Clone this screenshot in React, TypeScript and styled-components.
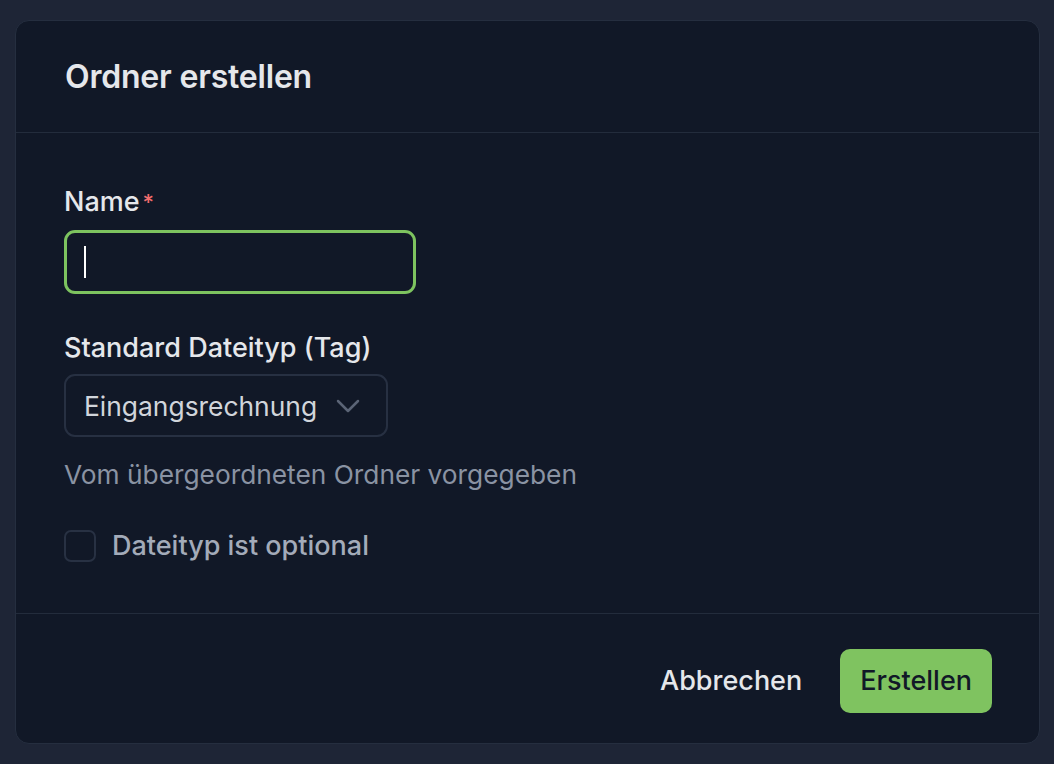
import React from "react";
import styled, { createGlobalStyle } from "styled-components";

const Global = createGlobalStyle`
  html, body { margin: 0; padding: 0; background: #1e2536; }
  body { font-family: Inter, "Noto Sans", sans-serif; -webkit-font-smoothing: antialiased; }
  * { box-sizing: border-box; }
`;

const Page = styled.div`
  width: 1054px;
  height: 764px;
  padding: 20px 14px 20px 15px;
`;

const Dialog = styled.div`
  height: 724px;
  background: #111827;
  border: 1px solid #252e3f;
  border-radius: 14px;
  display: flex;
  flex-direction: column;
`;

const Header = styled.div`
  height: 112px;
  padding: 0 49px;
  display: flex;
  align-items: center;
  border-bottom: 1px solid #232c3c;
`;

const Title = styled.h2`
  margin: 0;
  font-size: 32px;
  font-weight: 600;
  color: #e5e7eb;
  letter-spacing: -0.2px;
`;

const Body = styled.div`
  flex: 1;
  padding: 53px 48px 0;
  display: flex;
  flex-direction: column;
  align-items: flex-start;
  border-bottom: 1px solid #232c3c;
`;

const Label = styled.label<{ $top?: number }>`
  display: block;
  font-size: 27px;
  line-height: 32px;
  font-weight: 500;
  color: #e5e7eb;
  margin-top: ${(p) => p.$top ?? 0}px;
`;

const Required = styled.span`
  color: #f26d6d;
  margin-left: 3px;
  font-size: 22px;
  vertical-align: top;
`;

const Field = styled.div`
  margin-top: 12px;
  width: 352px;
  height: 64px;
  border: 3px solid #7dc35f;
  border-radius: 11px;
  display: flex;
  align-items: center;
  padding-left: 17px;
`;

const Caret = styled.span`
  width: 2px;
  height: 32px;
  background: #ffffff;
`;

const Select = styled.div`
  margin-top: 10px;
  width: 324px;
  height: 63px;
  border: 2px solid #273042;
  border-radius: 11px;
  display: flex;
  align-items: center;
  justify-content: space-between;
  padding: 0 26px 0 18px;
  font-size: 26.4px;
  color: #d1d5db;
`;

const Helper = styled.p`
  margin: 22px 0 0;
  font-size: 26.3px;
  line-height: 32px;
  color: #8a93a3;
`;

const CheckRow = styled.label`
  margin-top: 39px;
  display: flex;
  align-items: center;
  gap: 16px;
  font-size: 27px;
  line-height: 32px;
  font-weight: 500;
  color: #a3abb9;
`;

const Box = styled.span`
  width: 32px;
  height: 32px;
  border: 2px solid #283143;
  border-radius: 7px;
`;

const Footer = styled.div`
  height: 129px;
  display: flex;
  align-items: center;
  justify-content: flex-end;
  gap: 38px;
  padding: 4px 47px 0 0;
`;

const TextButton = styled.button`
  background: none;
  border: none;
  padding: 0;
  font-family: inherit;
  font-size: 27px;
  font-weight: 500;
  color: #e5e7eb;
`;

const PrimaryButton = styled.button`
  height: 64px;
  padding: 0 20px;
  background: #7fc360;
  border: none;
  border-radius: 10px;
  font-family: inherit;
  font-size: 27px;
  font-weight: 500;
  color: #111827;
`;

export default function App() {
  return (
    <Page>
      <Global />
      <Dialog>
        <Header>
          <Title>Ordner erstellen</Title>
        </Header>
        <Body>
          <Label>
            Name<Required>*</Required>
          </Label>
          <Field>
            <Caret />
          </Field>
          <Label $top={38}>Standard Dateityp (Tag)</Label>
          <Select>
            <span>Eingangsrechnung</span>
            <svg width="24" height="14" viewBox="0 0 24 14" fill="none">
              <path d="M2 2l10 10L22 2" stroke="#5b6476" strokeWidth="2.5" strokeLinecap="round" strokeLinejoin="round" />
            </svg>
          </Select>
          <Helper>Vom übergeordneten Ordner vorgegeben</Helper>
          <CheckRow>
            <Box />
            Dateityp ist optional
          </CheckRow>
        </Body>
        <Footer>
          <TextButton>Abbrechen</TextButton>
          <PrimaryButton>Erstellen</PrimaryButton>
        </Footer>
      </Dialog>
    </Page>
  );
}
